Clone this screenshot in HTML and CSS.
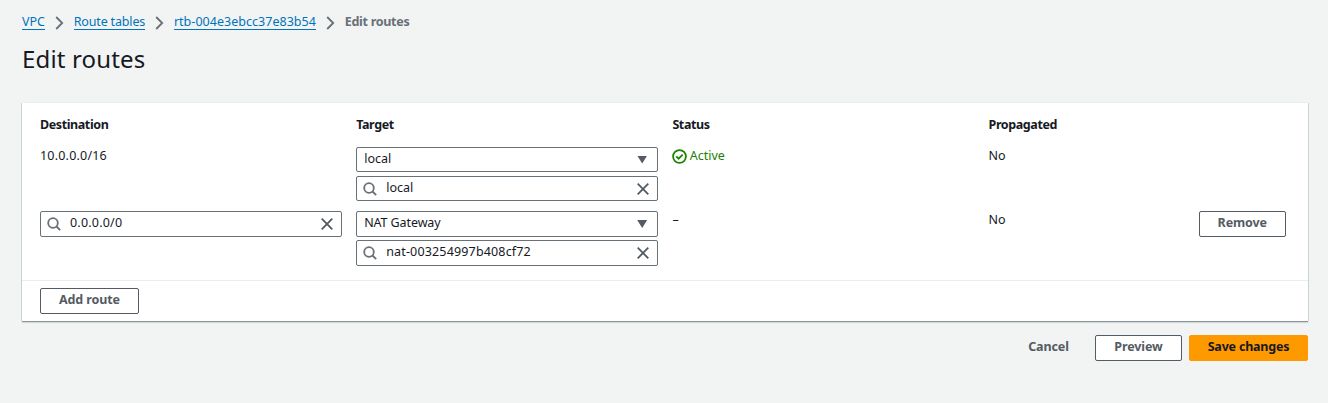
FILE: index.html
```html
<!DOCTYPE html>
<html lang="en">
<head>
<meta charset="utf-8">
<title>Edit routes</title>
<link rel="stylesheet" href="styles.css">
</head>
<body>
<svg class="defs" aria-hidden="true">
  <symbol id="chevron" viewBox="0 0 9 14"><path d="M1.2 1 7.2 7l-6 6"/></symbol>
  <symbol id="search" viewBox="0 0 14 14"><circle cx="6" cy="6" r="4.8"/><path d="m9.5 9.5 3.7 3.7"/></symbol>
  <symbol id="close" viewBox="0 0 12 12"><path d="m.7.7 10.6 10.6M11.3.7.7 11.3"/></symbol>
  <symbol id="check" viewBox="0 0 15 15"><circle cx="7.5" cy="7.5" r="6.4"/><path d="m4.2 7.4 2.4 2.3 4.1-4"/></symbol>
</svg>
<nav class="breadcrumbs">
  <a class="crumb">VPC</a>
  <svg class="chevron"><use href="#chevron"/></svg>
  <a class="crumb crumb-tables">Route tables</a>
  <svg class="chevron"><use href="#chevron"/></svg>
  <a class="crumb crumb-id">rtb-004e3ebcc37e83b54</a>
  <svg class="chevron"><use href="#chevron"/></svg>
  <span class="current">Edit routes</span>
</nav>
<h1 class="title"><span>Edit routes</span></h1>
<main class="card">
  <div class="row head">
    <div><span>Destination</span></div>
    <div><span>Target</span></div>
    <div><span>Status</span></div>
    <div><span>Propagated</span></div>
  </div>
  <div class="row first">
    <div class="value"><span class="cidr">10.0.0.0/16</span></div>
    <div class="stack">
      <div class="field select"><span class="text">local</span><i class="caret"></i></div>
      <div class="field"><svg class="search"><use href="#search"/></svg><span class="text">local</span><svg class="close"><use href="#close"/></svg></div>
    </div>
    <div class="value status"><svg class="check"><use href="#check"/></svg><span>Active</span></div>
    <div class="value"><span>No</span></div>
  </div>
  <div class="row second">
    <div class="field"><svg class="search"><use href="#search"/></svg><span class="text cidr">0.0.0.0/0</span><svg class="close"><use href="#close"/></svg></div>
    <div class="stack">
      <div class="field select"><span class="text gateway">NAT Gateway</span><i class="caret"></i></div>
      <div class="field"><svg class="search"><use href="#search"/></svg><span class="text nat">nat-003254997b408cf72</span><svg class="close"><use href="#close"/></svg></div>
    </div>
    <div class="value"><span>–</span></div>
    <div class="value"><span>No</span></div>
    <button class="button remove"><span>Remove</span></button>
  </div>
  <div class="foot"><button class="button add"><span>Add route</span></button></div>
</main>
<div class="actions">
  <button class="button link"><span>Cancel</span></button>
  <button class="button preview"><span>Preview</span></button>
  <button class="button primary"><span>Save changes</span></button>
</div>
</body>
</html>
```
FILE: styles.css
```css
* { box-sizing: border-box; }
body {
  margin: 0;
  padding: 12px 20px 0 22px;
  height: 403px;
  background: #f2f3f3;
  color: #16191f;
  font: 12.5px/20px "Noto Sans", sans-serif;
}
.defs { position: absolute; width: 0; height: 0; }
svg { fill: none; stroke: #687078; stroke-width: 1.8; flex: none; }
.breadcrumbs { display: flex; height: 20px; }
.crumb { height: 18px; color: #0073bb; border-bottom: 1px solid #0073bb; white-space: nowrap; }
.crumb-tables { letter-spacing: -.17px; }
.crumb-id { letter-spacing: .03px; }
.chevron { width: 9px; height: 14px; margin: 4px 10px 0 9.8px; }
.current { color: #687078; font-weight: 700; letter-spacing: -.28px; }
.title { margin: 11px 0 0; font-size: 24px; line-height: 32px; font-weight: 400; letter-spacing: .15px; }
.card {
  width: 1286px;
  height: 218px;
  margin-top: 28px;
  background: #fff;
  box-shadow: 0 1px 0 #879596, 1px 0 0 #ccd1d2, -1px 0 0 #ccd1d2, 0 -1px 0 #eaeded, 0 2px 1px #d5dbdb;
}
.row { display: grid; grid-template-columns: 302px 302px 302px 196px 87px; column-gap: 14.2px; padding-left: 18px; align-items: start; }
.head { height: 44px; padding-top: 12px; font-weight: 700; letter-spacing: -.4px; }
.first { height: 64px; }
.value { height: 20px; margin-top: -1px; }
.cidr { letter-spacing: .2px; }
.status { display: flex; color: #1d8102; }
.check { width: 15px; height: 15px; margin: 3px 3px 0 -.6px; stroke: #1d8102; }
.stack { display: grid; gap: 3px; }
.field { display: flex; align-items: center; height: 26px; width: 302px; padding: 0 8px 0 6px; border: 1px solid #687078; border-radius: 2px; background: #fff; }
.select { padding: 0 9px 0 7px; }
.first .field { height: 25px; }
.first .stack { gap: 4px; }
.text { flex: 1; line-height: 20px; margin-top: -2px; }
.gateway { letter-spacing: -.1px; }
.nat { letter-spacing: .16px; }
.search { width: 14px; height: 14px; margin-right: 9px; }
.close { width: 12px; height: 12px; stroke: #545b64; }
.caret { width: 10px; height: 8px; margin-right: 1px; background: #545b64; clip-path: polygon(0 0, 100% 0, 50% 100%); }
.second { height: 69px; }
.button { display: flex; justify-content: center; height: 26px; padding: 0; border: 1px solid #545b64; border-radius: 2px; background: #fff; color: #545b64; font: 700 12.5px/22px "Noto Sans", sans-serif; letter-spacing: -.1px; }
.button span { white-space: nowrap; }
.remove { width: 87px; }
.foot { height: 41px; padding: 7px 18px; border-top: 1px solid #eaeded; }
.add { width: 99px; }
.actions { display: flex; justify-content: flex-end; gap: 7px; margin-top: 14px; }
.link { width: 79px; border-color: transparent; background: none; }
.preview { width: 87px; }
.primary { width: 119px; border-color: #f90; background: #f90; color: #16191f; letter-spacing: -.2px; }
```
